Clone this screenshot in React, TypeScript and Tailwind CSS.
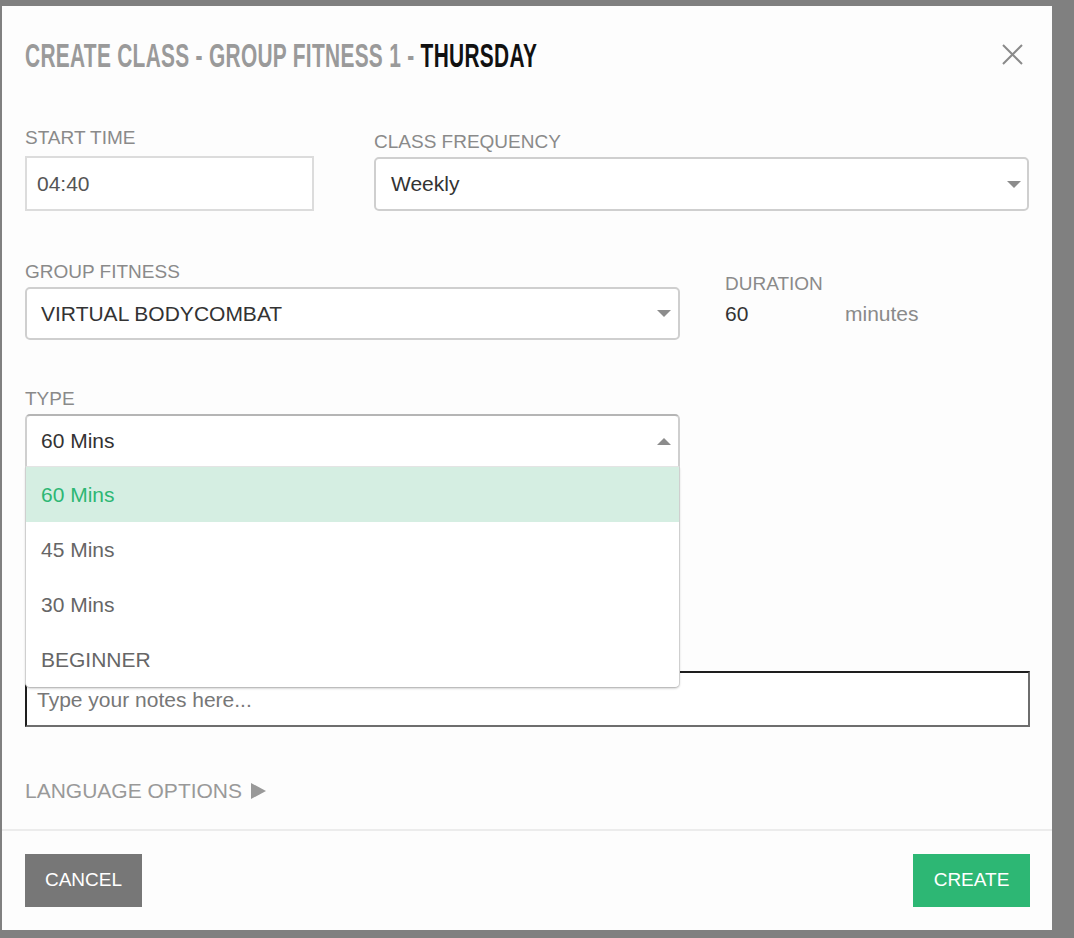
import type { ReactNode } from "react";

function Label({ children }: { children: ReactNode }) {
  return (
    <div className="text-[19px] uppercase leading-[22px] text-[#8a8a8a]">
      {children}
    </div>
  );
}

function Caret({ up = false }: { up?: boolean }) {
  return (
    <svg width="14" height="7" viewBox="0 0 14 7" className="shrink-0">
      <path d={up ? "M0 7 L7 0 L14 7 Z" : "M0 0 L14 0 L7 7 Z"} fill="#8c8c8c" />
    </svg>
  );
}

const typeOptions = ["60 Mins", "45 Mins", "30 Mins", "BEGINNER"];

export default function App() {
  return (
    <div className="min-h-screen bg-[#808080] pl-[2px] pt-[6px] font-['Liberation_Sans',Arial,sans-serif]">
      <div className="flex h-[924px] w-[1050px] flex-col bg-[#fdfdfd]">
        {/* header */}
        <div className="flex h-[97px] shrink-0 items-center justify-between pl-[23px] pr-[29px]">
          <h2 className="origin-left scale-x-[0.614] whitespace-nowrap text-[34px] font-bold leading-none tracking-[0.5px] text-[#9a9a9a]">
            CREATE CLASS - GROUP FITNESS 1 -{" "}
            <span className="text-[#111]">THURSDAY</span>
          </h2>
          <button className="flex size-[21px] items-center justify-center">
            <svg width="21" height="21" viewBox="0 0 21 21">
              <path d="M1 1 L20 20 M20 1 L1 20" stroke="#8a8a8a" strokeWidth="2" />
            </svg>
          </button>
        </div>

        {/* body */}
        <div className="flex-1 pl-[23px] pr-[22px]">
          <div className="mt-[24px] grid grid-cols-[289px_655px] gap-x-[60px]">
            <div>
              <Label>Start Time</Label>
              <div className="mt-[7px] flex h-[55px] items-center border-2 border-[#dcdcdc] bg-white pl-[10px] text-[21px] text-[#555]">
                04:40
              </div>
            </div>
            <div className="pt-[4px]">
              <Label>Class Frequency</Label>
              <div className="mt-[4px] flex h-[54px] items-center justify-between rounded-[5px] border-2 border-[#cfcfcf] bg-white pl-[15px] pr-[6px] text-[21px] text-[#333]">
                <span>Weekly</span>
                <Caret />
              </div>
            </div>
          </div>

          <div className="mt-[50px] flex">
            <div className="w-[655px]">
              <Label>Group Fitness</Label>
              <div className="mt-[4px] flex h-[53px] items-center justify-between rounded-[5px] border-2 border-[#cfcfcf] bg-white pl-[14px] pr-[7px] text-[21px] text-[#333]">
                <span>VIRTUAL BODYCOMBAT</span>
                <Caret />
              </div>
            </div>
            <div className="ml-[45px] pt-[12px]">
              <Label>Duration</Label>
              <div className="mt-[7px] flex text-[21px] leading-[24px]">
                <span className="w-[120px] text-[#333]">60</span>
                <span className="text-[#8a8a8a]">minutes</span>
              </div>
            </div>
          </div>

          <div className="relative mt-[48px] w-[655px]">
            <Label>Type</Label>
            <div className="mt-[4px] flex h-[53px] items-center justify-between rounded-t-[5px] border-2 border-b border-[#cfcfcf] border-t-[#b5b5b5] border-b-[#e6e6e6] bg-white pl-[14px] pr-[7px] text-[21px] text-[#333]">
              <span>60 Mins</span>
              <Caret up />
            </div>
            <ul className="absolute left-0 top-full z-10 w-full rounded-b-[5px] border border-t-0 border-[#cfcfcf] border-b-[#bdbdbd] bg-white shadow-[0_1px_2px_rgba(0,0,0,0.15)]">
              {typeOptions.map((o, i) => (
                <li
                  key={o}
                  className={
                    i === 0
                      ? "flex h-[55px] items-center bg-[#d5eee2] pl-[15px] text-[21px] text-[#2db774]"
                      : "flex h-[55px] items-center pl-[15px] text-[21px] text-[#666]"
                  }
                >
                  {o}
                </li>
              ))}
            </ul>
          </div>

          <textarea
            placeholder="Type your notes here..."
            className="mt-[204px] block h-[56px] w-full resize-none border-2 border-b-[#6e6e6e] border-l-[#1e1e1e] border-r-[#6e6e6e] border-t-[#1e1e1e] bg-white pb-[13px] pl-[10px] pr-[10px] pt-[15px] text-[21px] leading-[23px] text-[#333] outline-none placeholder:text-[#777]"
          />

          <div className="mt-[52px] flex items-center gap-[9px] text-[21px] leading-[24px] text-[#999]">
            <span>LANGUAGE OPTIONS</span>
            <svg width="15" height="16" viewBox="0 0 15 16">
              <path d="M0 0 L15 8 L0 16 Z" fill="#999" />
            </svg>
          </div>
        </div>

        {/* footer */}
        <div className="flex shrink-0 justify-between border-t-2 border-[#ececec] pb-[23px] pl-[23px] pr-[22px] pt-[23px]">
          <button className="h-[53px] w-[117px] bg-[#777] text-[19px] text-white">
            CANCEL
          </button>
          <button className="h-[53px] w-[117px] bg-[#2db774] text-[19px] text-white">
            CREATE
          </button>
        </div>
      </div>
    </div>
  );
}
